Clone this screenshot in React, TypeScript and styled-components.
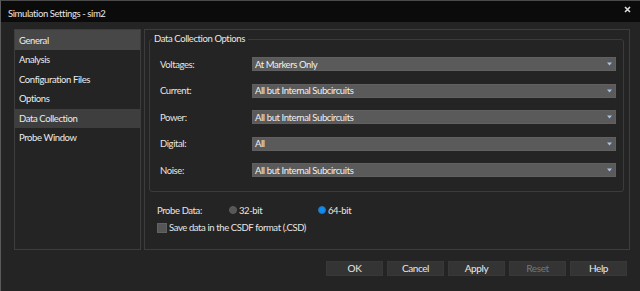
import React from "react";
import styled, { createGlobalStyle } from "styled-components";

const Global = createGlobalStyle`
  html, body { margin: 0; padding: 0; background: #232423; }
  body { font-family: Lato, "Liberation Sans", Arial, sans-serif; }
  * { box-sizing: border-box; }
`;

const Window = styled.div`
  width: 640px;
  height: 291px;
  background: #232423;
  border-left: 1px solid #5a5a5a;
  border-top: 1px solid #4a4a4a;
  display: flex;
  flex-direction: column;
  color: #e6e6e6;
  font-size: 9.5px;
  letter-spacing: -0.4px;
  overflow: hidden;
`;

const TitleBar = styled.div`
  height: 21px;
  background: #0b0b0b;
  display: flex;
  justify-content: space-between;
  align-items: flex-start;
  padding: 7px 9px 0 7px;
  flex-shrink: 0;
`;

const Title = styled.div`
  font-size: 9.5px;
  line-height: 12px;
  color: #e8e8e8;
`;

const CloseIcon = styled.svg`
  margin-top: -2px;
  display: block;
`;

const Body = styled.div`
  flex: 1;
  display: flex;
  flex-direction: column;
  padding: 7px 10px 0 13px;
`;

const Content = styled.div`
  display: flex;
  gap: 3px;
  height: 221px;
`;

const Sidebar = styled.div`
  width: 127px;
  border: 1px solid #3c3d3c;
  display: flex;
  flex-direction: column;
`;

const NavItem = styled.div<{ $active?: boolean; $first?: boolean }>`
  height: ${(p) => (p.$first ? "20px" : "19.5px")};
  display: flex;
  align-items: center;
  padding-left: 4px;
  background: ${(p) => (p.$active ? (p.$first ? "#474747" : "#3e3e3e") : "transparent")};
  color: #ececec;
`;

const MainPanel = styled.div`
  flex: 1;
  border: 1px solid #3c3d3c;
  padding: 9px 5px 0 4px;
  display: flex;
  flex-direction: column;
`;

const GroupBox = styled.fieldset`
  margin: -5px 0 0 0;
  border: 1px solid #3a3b3a;
  border-radius: 3px;
  padding: 13px 7px 12px 10px;
  min-width: 0;
  height: 158px;
  display: grid;
  grid-template-columns: 92px 1fr;
  row-gap: 12.5px;
  align-items: center;
`;

const Legend = styled.legend`
  padding: 0 3px 0 2px;
  margin-left: -8px;
  color: #e8e8e8;
  line-height: 10px;
`;

const FieldLabel = styled.div`
  color: #e6e6e6;
`;

const Select = styled.div`
  height: 14px;
  background: #5a5a5a;
  border: 1px solid #606060;
  display: flex;
  align-items: center;
  justify-content: space-between;
  padding: 0 3px 0 2px;
  color: #f0f0f0;
`;

const Arrow = styled.svg`
  display: block;
`;

const ProbeRow = styled.div`
  display: flex;
  align-items: center;
  margin-top: 12px;
  padding-left: 8px;
  height: 12px;
`;

const ProbeLabel = styled.div`
  width: 72px;
`;

const RadioOption = styled.label`
  display: flex;
  align-items: center;
  gap: 2px;
  width: 89px;
  color: #e6e6e6;
`;

const RadioDot = styled.span<{ $checked?: boolean }>`
  width: 8px;
  height: 8px;
  border-radius: 50%;
  background: ${(p) => (p.$checked ? "#0a8ef5" : "#575757")};
  border: 1px solid ${(p) => (p.$checked ? "#2f6fb0" : "#5e5e5e")};
  display: inline-block;
`;

const CheckRow = styled.label`
  display: flex;
  align-items: center;
  gap: 2px;
  margin-top: 6px;
  padding-left: 8px;
  color: #e6e6e6;
`;

const CheckBox = styled.span`
  width: 10px;
  height: 10px;
  background: #565656;
  border: 1px solid #626262;
  display: inline-block;
`;

const ButtonRow = styled.div`
  display: flex;
  justify-content: flex-end;
  gap: 4px;
  margin-top: 11px;
  padding-right: 3px;
`;

const Button = styled.button<{ $disabled?: boolean }>`
  width: 57px;
  height: 15px;
  padding: 0;
  background: #343434;
  border: 1px solid #383838;
  color: ${(p) => (p.$disabled ? "#777" : "#e8e8e8")};
  font-family: inherit;
  letter-spacing: inherit;
  font-size: 10px;
  line-height: 13px;
`;

const navItems = [
  "General",
  "Analysis",
  "Configuration Files",
  "Options",
  "Data Collection",
  "Probe Window",
];

const fields: [string, string][] = [
  ["Voltages:", "At Markers Only"],
  ["Current:", "All but Internal Subcircuits"],
  ["Power:", "All but Internal Subcircuits"],
  ["Digital:", "All"],
  ["Noise:", "All but Internal Subcircuits"],
];

export default function App() {
  return (
    <>
      <Global />
      <Window>
        <TitleBar>
          <Title>Simulation Settings - sim2</Title>
          <CloseIcon width="7" height="7" viewBox="0 0 7 7">
            <path d="M1 1 L6 6 M6 1 L1 6" stroke="#dcdcdc" strokeWidth="1.6" />
          </CloseIcon>
        </TitleBar>
        <Body>
          <Content>
            <Sidebar>
              {navItems.map((n, i) => (
                <NavItem key={n} $first={i === 0} $active={i === 0 || i === 4}>
                  {n}
                </NavItem>
              ))}
            </Sidebar>
            <MainPanel>
              <GroupBox>
                <Legend>Data Collection Options</Legend>
                {fields.map(([l, v]) => (
                  <React.Fragment key={l}>
                    <FieldLabel>{l}</FieldLabel>
                    <Select>
                      <span>{v}</span>
                      <Arrow width="5" height="4" viewBox="0 0 5 4">
                        <path d="M0 0.5 H5 L2.5 3.5 Z" fill="#a9c3ea" />
                      </Arrow>
                    </Select>
                  </React.Fragment>
                ))}
              </GroupBox>
              <ProbeRow>
                <ProbeLabel>Probe Data:</ProbeLabel>
                <RadioOption>
                  <RadioDot />
                  32-bit
                </RadioOption>
                <RadioOption>
                  <RadioDot $checked />
                  64-bit
                </RadioOption>
              </ProbeRow>
              <CheckRow>
                <CheckBox />
                Save data in the CSDF format (.CSD)
              </CheckRow>
            </MainPanel>
          </Content>
          <ButtonRow>
            <Button>OK</Button>
            <Button>Cancel</Button>
            <Button>Apply</Button>
            <Button $disabled>Reset</Button>
            <Button>Help</Button>
          </ButtonRow>
        </Body>
      </Window>
    </>
  );
}
